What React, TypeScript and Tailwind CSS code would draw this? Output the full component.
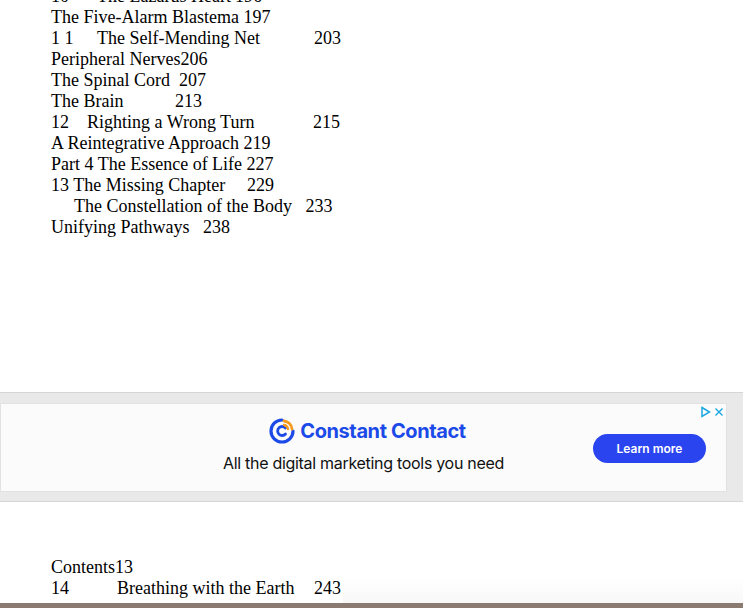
export default function App() {
  const f = { fontFamily: '"Liberation Serif", "Times New Roman", serif' };
  return (
    <div className="relative w-[743px] h-[608px] overflow-hidden bg-white text-black" style={f}>
      <div className="pl-[51px] -mt-[14px] text-[18px] leading-[21px]">
        <div className="flex"><span className="w-[46px]">10</span><span className="w-[138px]">The Lazarus Heart</span><span>196</span></div>
        <div>The Five-Alarm Blastema&nbsp;197</div>
        <div className="flex"><span className="w-[46px]">1 1</span><span className="w-[217px]">The Self-Mending Net</span><span>203</span></div>
        <div>Peripheral Nerves206</div>
        <div>The Spinal Cord&nbsp; 207</div>
        <div className="flex"><span className="w-[124px]">The Brain</span><span>213</span></div>
        <div className="flex"><span className="w-[36px]">12</span><span className="w-[226px]">Righting a Wrong Turn</span><span>215</span></div>
        <div>A Reintegrative Approach 219</div>
        <div>Part 4 The Essence of Life 227</div>
        <div className="flex"><span className="w-[196px]">13 The Missing Chapter</span><span>229</span></div>
        <div className="pl-[23px]">The Constellation of the Body&nbsp;&nbsp; 233</div>
        <div>Unifying Pathways&nbsp;&nbsp; 238</div>
      </div>
      <div className="absolute left-0 top-[392px] w-full h-[110px] bg-[#e9e9e9] border-t border-[#d6d6d6] border-b pt-[10px]">
        <div className="relative w-[727px] h-[89px] bg-[#fbfbfb] border border-[#e2e2e2] flex flex-col items-center pt-[12px]" style={{ fontFamily: 'Inter, "Open Sans", sans-serif' }}>
          <div className="flex items-center gap-[3px] ml-[6px]">
            <svg width="30" height="30" viewBox="0 0 30 30">
              <path d="M15 4 A11 11 0 1 0 26 15" fill="none" stroke="#1b4ae8" strokeWidth="3.2" strokeLinecap="round" />
              <path d="M18.5 12 A4.5 4.5 0 1 0 18.5 18" fill="none" stroke="#1b4ae8" strokeWidth="2.8" strokeLinecap="round" />
              <path d="M17 5 A9 9 0 0 1 25 13" fill="none" stroke="#f59a1c" strokeWidth="2.8" strokeLinecap="round" />
              <path d="M17 9 A5 5 0 0 1 21 13" fill="none" stroke="#f59a1c" strokeWidth="2.4" strokeLinecap="round" />
            </svg>
            <span className="text-[#1b4ae8] text-[20px] font-bold tracking-[-0.4px]">Constant Contact</span>
          </div>
          <div className="mt-[5px] text-[16px] text-[#111] tracking-[-0.3px]">All the digital marketing tools you need</div>
          <div className="absolute left-[592px] top-[30px] w-[113px] h-[29px] rounded-full bg-[#2a44ef] text-white text-[12px] font-semibold flex items-center justify-center">Learn more</div>
          <div className="absolute right-[2px] top-[2px] flex items-center gap-[3px]">
            <svg width="11" height="12" viewBox="0 0 11 12"><path d="M2 1.5 L9.5 6 L2 10.5 Z" fill="none" stroke="#1ba7e0" strokeWidth="1.5" /></svg>
            <svg width="10" height="10" viewBox="0 0 10 10"><path d="M1.5 1.5 L8.5 8.5 M8.5 1.5 L1.5 8.5" stroke="#1ba7e0" strokeWidth="1.4" /></svg>
          </div>
        </div>
      </div>
      <div className="absolute left-[51px] top-[557px] text-[18px] leading-[21px]">
        <div>Contents13</div>
        <div className="flex"><span className="w-[66px]">14</span><span className="w-[197px]">Breathing with the Earth</span><span>243</span></div>
      </div>
      <div className="absolute right-0 bottom-0 w-[400px] h-[30px] bg-gradient-to-b from-transparent to-[#f0f0f0]/60 pointer-events-none" />
      <div className="absolute left-0 bottom-0 w-full h-[5px] bg-[#8a7a70]" />
    </div>
  );
}
